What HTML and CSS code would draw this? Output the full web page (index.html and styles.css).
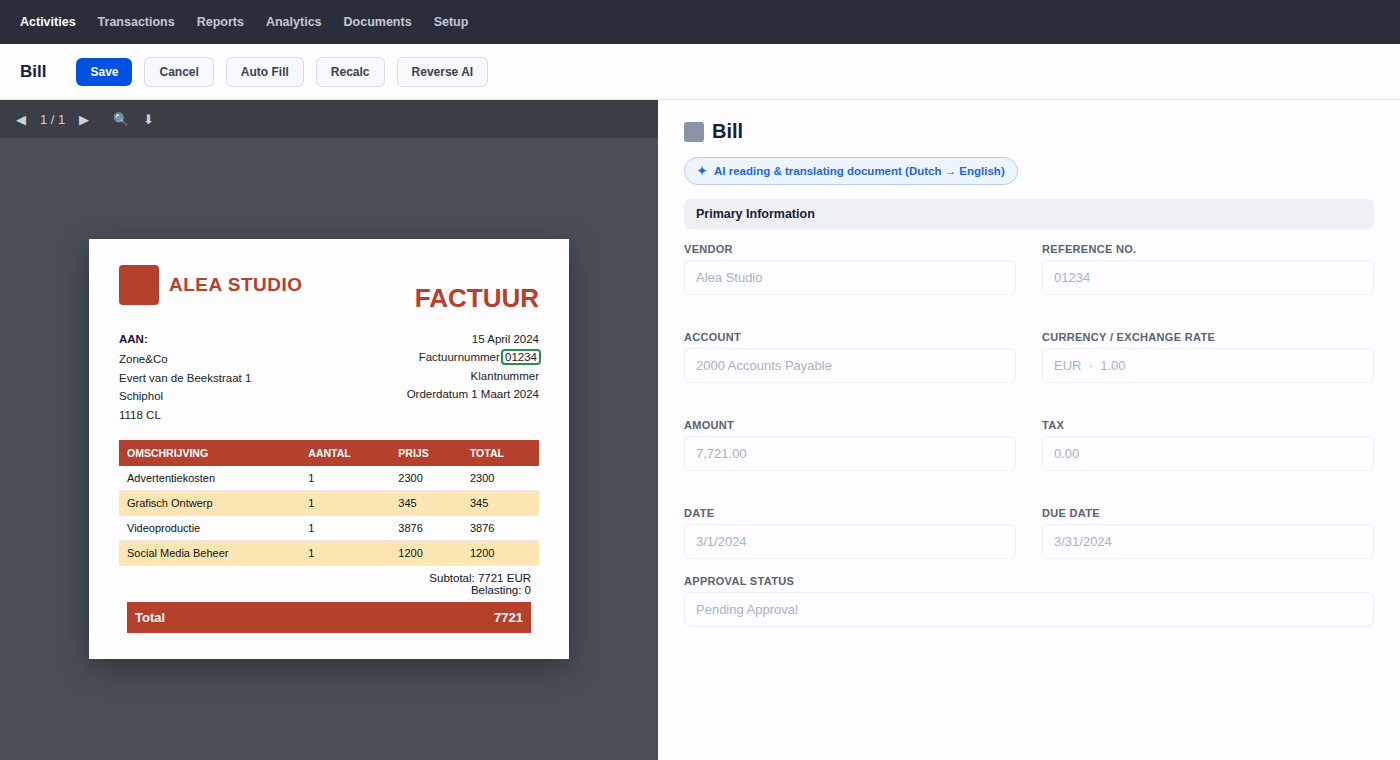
FILE: index.html
```html
<!DOCTYPE html>
<html lang="en">
<head>
  <meta charset="utf-8">
  <title>Bill</title>
  <link rel="stylesheet" href="styles.css">
</head>
<body>

<div class="nav">
  <div class="nav-item active">Activities</div>
  <div class="nav-item">Transactions</div>
  <div class="nav-item">Reports</div>
  <div class="nav-item">Analytics</div>
  <div class="nav-item">Documents</div>
  <div class="nav-item">Setup</div>
</div>

<div class="actions">
  <div class="actions-title">Bill</div>
  <button class="btn primary">Save</button>
  <button class="btn">Cancel</button>
  <button class="btn">Auto Fill</button>
  <button class="btn">Recalc</button>
  <button class="btn">Reverse AI</button>
</div>

<div class="main">
  <div class="viewer">
    <div class="viewer-bar">
      <span>◀</span>
      <span>1 / 1</span>
      <span>▶</span>
      <span class="zoom">🔍</span>
      <span>⬇</span>
    </div>
    <div class="stage">
      <div class="doc">
        <div class="doc-head">
          <div class="brand">
            <div class="logo"></div>
            <div class="brand-name">ALEA STUDIO</div>
          </div>
          <div class="doc-title">FACTUUR</div>
        </div>

        <div class="doc-meta">
          <div>
            <div class="to">AAN:</div>
            <div>Zone&amp;Co</div>
            <div>Evert van de Beekstraat 1</div>
            <div>Schiphol</div>
            <div>1118 CL</div>
          </div>
          <div class="right">
            <div>15 April 2024</div>
            <div>Factuurnummer <span class="mark">01234</span></div>
            <div>Klantnummer</div>
            <div>Orderdatum 1 Maart 2024</div>
          </div>
        </div>

        <table class="lines">
          <thead>
            <tr><th class="c-desc">OMSCHRIJVING</th><th class="c-qty">AANTAL</th><th class="c-price">PRIJS</th><th>TOTAL</th></tr>
          </thead>
          <tbody>
            <tr><td>Advertentiekosten</td><td>1</td><td>2300</td><td>2300</td></tr>
            <tr><td>Grafisch Ontwerp</td><td>1</td><td>345</td><td>345</td></tr>
            <tr><td>Videoproductie</td><td>1</td><td>3876</td><td>3876</td></tr>
            <tr><td>Social Media Beheer</td><td>1</td><td>1200</td><td>1200</td></tr>
          </tbody>
        </table>

        <div class="totals">
          <div>Subtotal: 7721 EUR</div>
          <div>Belasting: 0</div>
          <div class="grand"><span>Total</span><span>7721</span></div>
        </div>
      </div>
    </div>
  </div>

  <div class="form">
    <div class="form-title"><span class="form-icon"></span>Bill</div>
    <div class="pill"><span>✦</span><span>AI reading &amp; translating document (Dutch → English)</span></div>
    <div class="section">Primary Information</div>

    <div class="grid">
      <div class="field">
        <div class="label">VENDOR</div>
        <div class="value">Alea Studio</div>
      </div>
      <div class="field">
        <div class="label">REFERENCE NO.</div>
        <div class="value">01234</div>
      </div>
      <div class="field">
        <div class="label">ACCOUNT</div>
        <div class="value">2000 Accounts Payable</div>
      </div>
      <div class="field">
        <div class="label">CURRENCY / EXCHANGE RATE</div>
        <div class="value">EUR &nbsp;·&nbsp; 1.00</div>
      </div>
      <div class="field">
        <div class="label">AMOUNT</div>
        <div class="value">7,721.00</div>
      </div>
      <div class="field">
        <div class="label">TAX</div>
        <div class="value">0.00</div>
      </div>
      <div class="field">
        <div class="label">DATE</div>
        <div class="value">3/1/2024</div>
      </div>
      <div class="field">
        <div class="label">DUE DATE</div>
        <div class="value">3/31/2024</div>
      </div>
    </div>

    <div class="field status">
      <div class="label">APPROVAL STATUS</div>
      <div class="value">Pending Approval</div>
    </div>
  </div>
</div>

</body>
</html>
```
FILE: styles.css
```css
* {
    box-sizing: border-box;
}

body {
    margin: 0;
    height: 760px;
    display: flex;
    flex-direction: column;
    overflow: hidden;
    font-family: "Liberation Sans", Arial, sans-serif;
    color: #16213a;
    background: #fdfdff;
}

/* top navigation */
.nav {
    height: 44px;
    display: flex;
    align-items: center;
    gap: 22px;
    padding: 0 20px;
    background: #2a2e3b;
    font-size: 12.5px;
    font-weight: bold;
    color: #c3c8d4;
}

.nav-item.active {
    color: #fff;
}

/* action bar */
.actions {
    height: 56px;
    display: flex;
    align-items: center;
    gap: 12px;
    padding: 0 20px;
    border-bottom: 1px solid #e2e5ec;
}

.actions-title {
    font-size: 17px;
    font-weight: bold;
    margin-right: 18px;
}

.btn {
    font-family: inherit;
    font-size: 12px;
    font-weight: bold;
    line-height: 14px;
    padding: 7px 14px;
    border: 1px solid #d9dcea;
    border-radius: 6px;
    background: #f7f8fb;
    color: #3a4152;
}

.btn.primary {
    border: none;
    background: #0150e0;
    color: #fff;
}

.main {
    flex: 1;
    display: flex;
    min-height: 0;
}

/* document viewer */
.viewer {
    width: 47%;
    display: flex;
    flex-direction: column;
    background: #4a4e58;
}

.viewer-bar {
    height: 38px;
    display: flex;
    align-items: center;
    gap: 14px;
    padding: 0 16px;
    background: #3b3e47;
    color: #cdd1da;
    font-size: 13px;
}

.zoom {
    margin-left: 10px;
}

.stage {
    flex: 1;
    display: flex;
    align-items: center;
    justify-content: center;
}

.doc {
    width: 480px;
    height: 420px;
    padding: 26px 30px;
    background: #fdfdff;
    box-shadow: 0 8px 30px rgba(0, 0, 0, 0.35);
}

.doc-head {
    display: flex;
    justify-content: space-between;
    align-items: flex-start;
    color: #b5402c;
    font-weight: bold;
}

.brand {
    display: flex;
    align-items: center;
    gap: 10px;
}

.logo {
    width: 40px;
    height: 40px;
    border-radius: 4px;
    background: #b5402c;
}

.brand-name {
    font-size: 19px;
    letter-spacing: 0.5px;
}

.doc-title {
    font-size: 26px;
    line-height: 30px;
    margin-top: 18px;
}

.doc-meta {
    display: flex;
    justify-content: space-between;
    margin-top: 17px;
    font-size: 11.5px;
    line-height: 1.6;
    color: #222;
}

.to {
    font-weight: bold;
    color: #16162a;
    margin-bottom: 2px;
}

.right {
    text-align: right;
}

.mark {
    padding: 0 2px;
    margin: 0 -2px;
    border: 2px solid #2e8b57;
    border-radius: 4px;
}

.lines {
    width: 100%;
    margin-top: 16px;
    border-collapse: collapse;
    table-layout: fixed;
    font-size: 11px;
    line-height: 12px;
    color: #111;
}

.lines th {
    padding: 7px 8px;
    text-align: left;
    font-size: 10.5px;
    background: #b5402c;
    color: #fff;
}

.lines td {
    padding: 6px 8px;
    border-bottom: 1px solid #eae6e8;
}

.lines tr:nth-child(even) td {
    background: #fde6b3;
}

.c-desc {
    width: 181.3px;
}

.c-qty {
    width: 90px;
}

.c-price {
    width: 71.6px;
}

.totals {
    padding: 6px 8px;
    text-align: right;
    font-size: 11.5px;
    line-height: 12px;
    color: #111;
}

.grand {
    display: flex;
    justify-content: space-between;
    margin-top: 6px;
    padding: 8px;
    background: #b5402c;
    color: #fff;
    font-size: 13px;
    font-weight: bold;
    line-height: 15px;
}

/* bill form */
.form {
    flex: 1;
    padding: 20px 26px;
}

.form-title {
    display: flex;
    align-items: center;
    gap: 8px;
    font-size: 20px;
    font-weight: bold;
    line-height: 23px;
}

.form-icon {
    width: 20px;
    height: 20px;
    border-radius: 3px;
    background: #8a94a5;
}

.pill {
    display: flex;
    align-items: center;
    gap: 7px;
    width: fit-content;
    height: 28px;
    margin-top: 14px;
    padding: 0 12px;
    border: 1px solid #b5cdf6;
    border-radius: 14px;
    background: #eef4fd;
    color: #2466e0;
    font-size: 11.5px;
    font-weight: bold;
}

.section {
    height: 30px;
    margin-top: 14px;
    padding: 0 12px;
    border-radius: 6px;
    background: #eef0f6;
    font-size: 12.5px;
    font-weight: bold;
    line-height: 30px;
}

.grid {
    display: grid;
    grid-template-columns: 1fr 1fr;
    gap: 36px 26px;
    margin-top: 14px;
}

.label {
    font-size: 11px;
    font-weight: bold;
    line-height: 12px;
    letter-spacing: 0.3px;
    color: #5a6372;
}

.value {
    height: 35px;
    margin-top: 5px;
    padding: 0 11px;
    border: 1px solid #eceff4;
    border-radius: 6px;
    font-size: 13px;
    line-height: 33px;
    color: #a9b2bf;
}

.status {
    margin-top: 16px;
}
```
